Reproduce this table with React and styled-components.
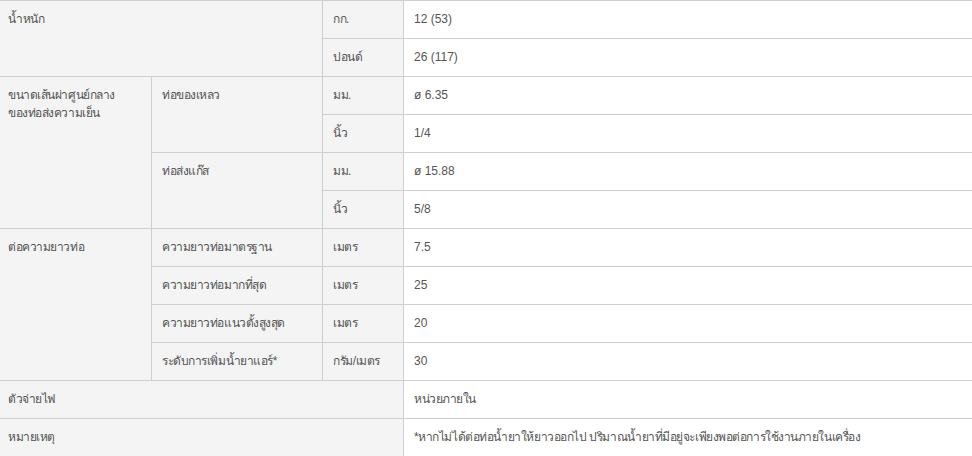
import React from 'react';
import styled, { createGlobalStyle } from 'styled-components';

const GlobalStyle = createGlobalStyle`
  html, body {
    margin: 0;
    padding: 0;
    background: #fff;
    overflow: hidden;
  }
`;

const StyledSpecTable = styled.table`
  border-collapse: separate;
  border-spacing: 0;
  table-layout: fixed;
  width: 990px;
  font-family: Tahoma, 'Liberation Sans', Arial, sans-serif;
  font-size: 12px;
  line-height: 18px;
  color: #555;
`;

const Cell = styled.td`
  box-sizing: border-box;
  height: 38px;
  padding: 9px 10px 10px;
  vertical-align: top;
  text-align: left;
  border-top: 1px solid #cfcfcf;
  border-left: ${({ $lead }) => ($lead ? 'none' : '1px solid #cfcfcf')};
  padding-left: ${({ $lead }) => ($lead ? '8px' : '10px')};
  background: ${({ $value }) => ($value ? '#fff' : '#f4f4f4')};
  letter-spacing: ${({ $num }) => ($num ? 'normal' : '-0.45px')};
  white-space: nowrap;
`;

const SpecTable = () => (
  <StyledSpecTable>
    <colgroup>
      <col style={{ width: 151 }} />
      <col style={{ width: 171 }} />
      <col style={{ width: 81 }} />
      <col />
    </colgroup>
    <tbody>
      <tr>
        <Cell $lead colSpan={2} rowSpan={2}>น้ำหนัก</Cell>
        <Cell>กก.</Cell>
        <Cell $value $num>12 (53)</Cell>
      </tr>
      <tr>
        <Cell>ปอนด์</Cell>
        <Cell $value $num>26 (117)</Cell>
      </tr>
      <tr>
        <Cell $lead rowSpan={4}>
          ขนาดเส้นผ่าศูนย์กลาง
          <br />
          ของท่อส่งความเย็น
        </Cell>
        <Cell rowSpan={2}>ท่อของเหลว</Cell>
        <Cell>มม.</Cell>
        <Cell $value $num>ø 6.35</Cell>
      </tr>
      <tr>
        <Cell>นิ้ว</Cell>
        <Cell $value $num>1/4</Cell>
      </tr>
      <tr>
        <Cell rowSpan={2}>ท่อส่งแก๊ส</Cell>
        <Cell>มม.</Cell>
        <Cell $value $num>ø 15.88</Cell>
      </tr>
      <tr>
        <Cell>นิ้ว</Cell>
        <Cell $value $num>5/8</Cell>
      </tr>
      <tr>
        <Cell $lead rowSpan={4}>ต่อความยาวท่อ</Cell>
        <Cell>ความยาวท่อมาตรฐาน</Cell>
        <Cell>เมตร</Cell>
        <Cell $value $num>7.5</Cell>
      </tr>
      <tr>
        <Cell>ความยาวท่อมากที่สุด</Cell>
        <Cell>เมตร</Cell>
        <Cell $value $num>25</Cell>
      </tr>
      <tr>
        <Cell>ความยาวท่อแนวตั้งสูงสุด</Cell>
        <Cell>เมตร</Cell>
        <Cell $value $num>20</Cell>
      </tr>
      <tr>
        <Cell>ระดับการเพิ่มน้ำยาแอร์*</Cell>
        <Cell>กรัม/เมตร</Cell>
        <Cell $value $num>30</Cell>
      </tr>
      <tr>
        <Cell $lead colSpan={3}>ตัวจ่ายไฟ</Cell>
        <Cell $value>หน่วยภายใน</Cell>
      </tr>
      <tr>
        <Cell $lead colSpan={3}>หมายเหตุ</Cell>
        <Cell $value>
          *หากไม่ได้ต่อท่อน้ำยาให้ยาวออกไป ปริมาณน้ำยาที่มีอยู่จะเพียงพอต่อการใช้งานภายในเครื่อง
        </Cell>
      </tr>
    </tbody>
  </StyledSpecTable>
);

const App = () => (
  <>
    <GlobalStyle />
    <SpecTable />
  </>
);

export default App;
